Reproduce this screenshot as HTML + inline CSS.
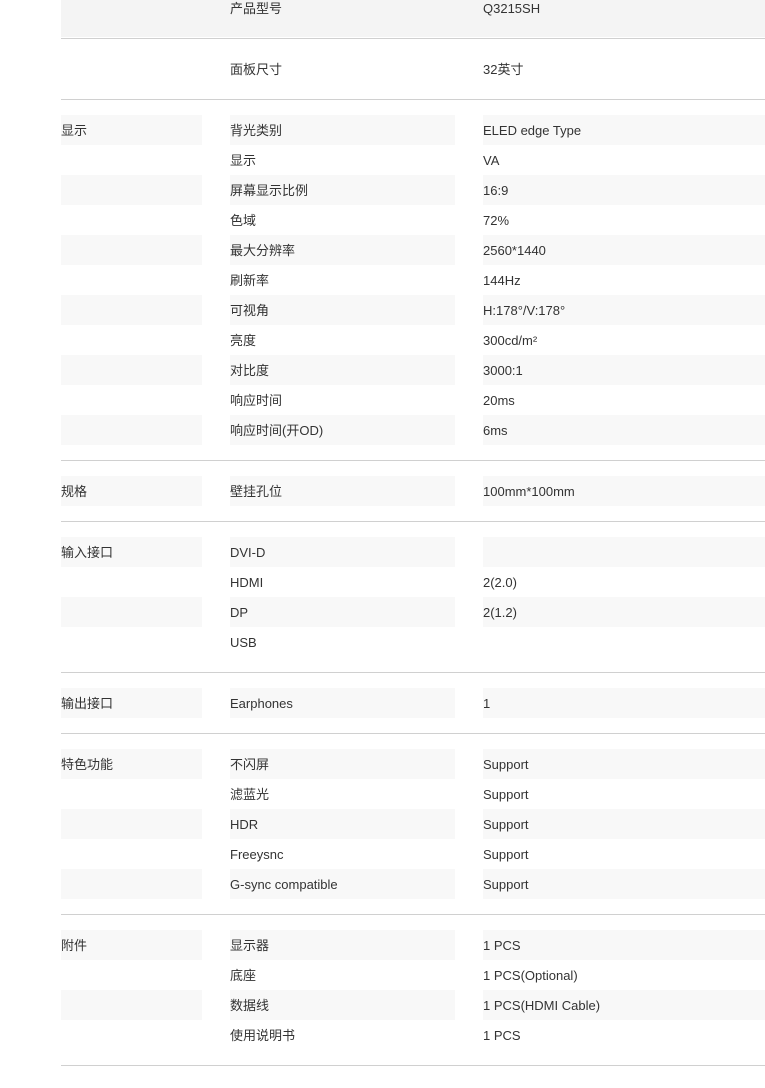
<!DOCTYPE html>
<html><head><meta charset="utf-8"><style>
*{margin:0;padding:0;box-sizing:border-box}
body{width:765px;height:1088px;background:#fff;position:relative;overflow:hidden;font-family:"Liberation Sans","Noto Sans CJK SC",sans-serif;font-size:13px;color:#333}
.c{position:absolute;height:30px;line-height:32px;white-space:nowrap}
.s{background:#f8f8f8}
.a{left:61px;width:141px}
.b{left:230px;width:225px}
.d{left:483px;width:282px}
.ln{position:absolute;left:61px;width:704px;height:1px;background:#d0d0d0}
</style></head><body>
<div style="position:absolute;left:61px;top:0;width:704px;height:37px;background:#f4f4f4"></div>
<div class="c b" style="top:-7px">产品型号</div><div class="c d" style="top:-7px">Q3215SH</div>
<div class="ln" style="top:38px"></div>
<div class="c b" style="top:54px">面板尺寸</div><div class="c d" style="top:54px">32英寸</div>
<div class="ln" style="top:99px"></div>
<div id="rows"></div>
<script>
var secs=[
[115,"显示",[["背光类别","ELED edge Type"],["显示","VA"],["屏幕显示比例","16:9"],["色域","72%"],["最大分辨率","2560*1440"],["刷新率","144Hz"],["可视角","H:178°/V:178°"],["亮度","300cd/m²"],["对比度","3000:1"],["响应时间","20ms"],["响应时间(开OD)","6ms"]],460],
[476,"规格",[["壁挂孔位","100mm*100mm"]],521],
[537,"输入接口",[["DVI-D",""],["HDMI","2(2.0)"],["DP","2(1.2)"],["USB",""]],672],
[688,"输出接口",[["Earphones","1"]],733],
[749,"特色功能",[["不闪屏","Support"],["滤蓝光","Support"],["HDR","Support"],["Freeysnc","Support"],["G-sync compatible","Support"]],914],
[930,"附件",[["显示器","1 PCS"],["底座","1 PCS(Optional)"],["数据线","1 PCS(HDMI Cable)"],["使用说明书","1 PCS"]],1065]];
var h="";
secs.forEach(function(s){
 s[2].forEach(function(r,i){
  var t=s[0]+i*30, st=i%2==0?" s":"";
  h+='<div class="c a'+st+'" style="top:'+t+'px">'+(i==0?s[1]:'')+'</div>';
  h+='<div class="c b'+st+'" style="top:'+t+'px">'+r[0]+'</div>';
  h+='<div class="c d'+st+'" style="top:'+t+'px">'+r[1]+'</div>';
 });
 h+='<div class="ln" style="top:'+s[3]+'px"></div>';
});
document.getElementById("rows").innerHTML=h;
</script>
</body></html>
